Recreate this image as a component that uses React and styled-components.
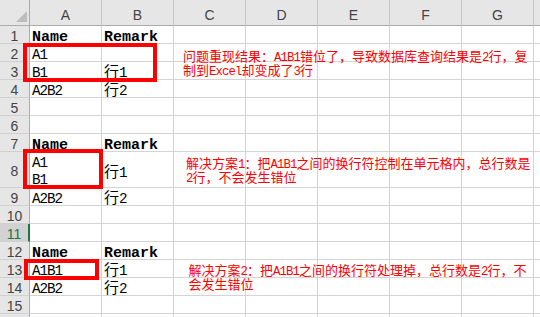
import React from 'react';
import styled, { createGlobalStyle } from 'styled-components';

const GlobalStyle = createGlobalStyle`
  *, *::before, *::after { box-sizing: border-box; }
  html, body { margin: 0; padding: 0; background: #fff; overflow: hidden; }
  body { width: 540px; height: 317px; }
`;

const Sheet = styled.div`
  position: relative;
  width: 540px;
  height: 317px;
  overflow: hidden;
  display: grid;
  grid-template-columns: 30px repeat(8, 72px);
  grid-template-rows: ${(p) => p.$rows};
  font-family: "Noto Sans CJK SC", sans-serif;
`;

const Corner = styled.div`
  background: #e6e6e6;
  border-right: 1px solid #ababab;
  border-bottom: 1px solid #ababab;
  display: flex;
  align-items: flex-end;
  justify-content: flex-end;
  padding: 0 2px 3px 0;
`;

const ColHeader = styled.div`
  background: #e6e6e6;
  border-right: 1px solid #c6c6c6;
  border-bottom: 1px solid #ababab;
  font: 14px "Liberation Sans", Arial, sans-serif;
  color: #444;
  display: flex;
  align-items: center;
  justify-content: center;
  padding-top: 4px;
`;

const RowHeader = styled.div`
  background: ${(p) => (p.$selected ? '#d2d2d2' : '#e6e6e6')};
  border-right: ${(p) => (p.$selected ? '2px solid #217346' : '1px solid #ababab')};
  border-bottom: 1px solid #d0d0d0;
  font: 14px "Liberation Sans", Arial, sans-serif;
  color: ${(p) => (p.$selected ? '#217346' : '#444')};
  display: flex;
  align-items: center;
  justify-content: center;
  padding-top: 2px;
`;

const Cell = styled.div`
  border-right: 1px solid #d4d4d4;
  border-bottom: 1px solid #d4d4d4;
  font-size: 15px;
  line-height: 17px;
  font-weight: ${(p) => (p.$bold ? 700 : 400)};
  color: #000;
  padding-left: 2px;
  padding-top: ${(p) => (p.$center ? '2px' : '0')};
  white-space: nowrap;
  display: flex;
  flex-direction: column;
  justify-content: ${(p) => (p.$center ? 'center' : 'flex-start')};
`;

const Lat = styled.span`
  font-family: "Liberation Mono", monospace;
  font-size: ${(p) => (p.$bold ? '1em' : '0.95em')};
  letter-spacing: ${(p) => (p.$bold ? '0' : '-0.074em')};
  line-height: 0;
`;

const Frame = styled.div`
  position: absolute;
  left: ${(p) => p.$x}px;
  top: ${(p) => p.$y}px;
  width: ${(p) => p.$w}px;
  height: ${(p) => p.$h}px;
  border: 4px solid #ff0000;
  pointer-events: none;
`;

const Note = styled.div`
  position: absolute;
  left: ${(p) => p.$x}px;
  top: ${(p) => p.$y}px;
  color: #ff0000;
  font-size: 13px;
  line-height: 14.3px;
  white-space: nowrap;
`;

const Line = styled.div``;

const Mixed = ({ text, bold }) =>
  text
    .split(/([\x20-\x7e]+)/)
    .filter(Boolean)
    .map((s, i) =>
      /^[\x20-\x7e]+$/.test(s) ? (
        <Lat key={i} $bold={bold}>
          {s}
        </Lat>
      ) : (
        <React.Fragment key={i}>{s}</React.Fragment>
      )
    );

const COLS = ['A', 'B', 'C', 'D', 'E', 'F', 'G', ''];

const ROWS = [
  { n: 1, a: ['Name'], b: 'Remark', bold: true },
  { n: 2, a: ['A1'] },
  { n: 3, a: ['B1'], b: '行1' },
  { n: 4, a: ['A2B2'], b: '行2' },
  { n: 5 },
  { n: 6 },
  { n: 7, a: ['Name'], b: 'Remark', bold: true },
  { n: 8, a: ['A1', 'B1'], b: '行1', tall: true },
  { n: 9, a: ['A2B2'], b: '行2' },
  { n: 10 },
  { n: 11, selected: true },
  { n: 12, a: ['Name'], b: 'Remark', bold: true },
  { n: 13, a: ['A1B1'], b: '行1' },
  { n: 14, a: ['A2B2'], b: '行2' },
  { n: 15 },
  { n: '' },
];

const NOTES = [
  { x: 183, y: 49, lines: ['问题重现结果：A1B1错位了，导致数据库查询结果是2行，复', '制到Excel却变成了3行'] },
  { x: 186, y: 156, lines: ['解决方案1：把A1B1之间的换行符控制在单元格内，总行数是', '2行，不会发生错位'] },
  { x: 188.5, y: 262.5, lines: ['解决方案2：把A1B1之间的换行符处理掉，总行数是2行，不', '会发生错位'] },
];

const FRAMES = [
  { x: 23, y: 43, w: 134, h: 39 },
  { x: 23, y: 149, w: 80, h: 40 },
  { x: 24, y: 259, w: 75, h: 21 },
];

export default function App() {
  const rowTracks = ['26px', ...ROWS.map((r) => (r.tall ? '36px' : '18px'))].join(' ');
  return (
    <>
      <GlobalStyle />
      <Sheet $rows={rowTracks}>
        <Corner>
          <svg width="11" height="11" viewBox="0 0 11 11">
            <polygon points="11,0 11,11 0,11" fill="#bdbdbd" />
          </svg>
        </Corner>
        {COLS.map((c, i) => (
          <ColHeader key={i}>{c}</ColHeader>
        ))}
        {ROWS.map((r, ri) => (
          <React.Fragment key={ri}>
            <RowHeader $selected={r.selected}>{r.n}</RowHeader>
            <Cell $bold={r.bold}>
              {(r.a || []).map((t, i) => (
                <Line key={i}>
                  <Mixed text={t} bold={r.bold} />
                </Line>
              ))}
            </Cell>
            <Cell $bold={r.bold} $center={r.tall}>
              {r.b && (
                <Line>
                  <Mixed text={r.b} bold={r.bold} />
                </Line>
              )}
            </Cell>
            {COLS.slice(2).map((c, i) => (
              <Cell key={i} />
            ))}
          </React.Fragment>
        ))}
        {FRAMES.map((f, i) => (
          <Frame key={i} $x={f.x} $y={f.y} $w={f.w} $h={f.h} />
        ))}
        {NOTES.map((n, i) => (
          <Note key={i} $x={n.x} $y={n.y}>
            {n.lines.map((l, j) => (
              <Line key={j}>
                <Mixed text={l} />
              </Line>
            ))}
          </Note>
        ))}
      </Sheet>
    </>
  );
}
